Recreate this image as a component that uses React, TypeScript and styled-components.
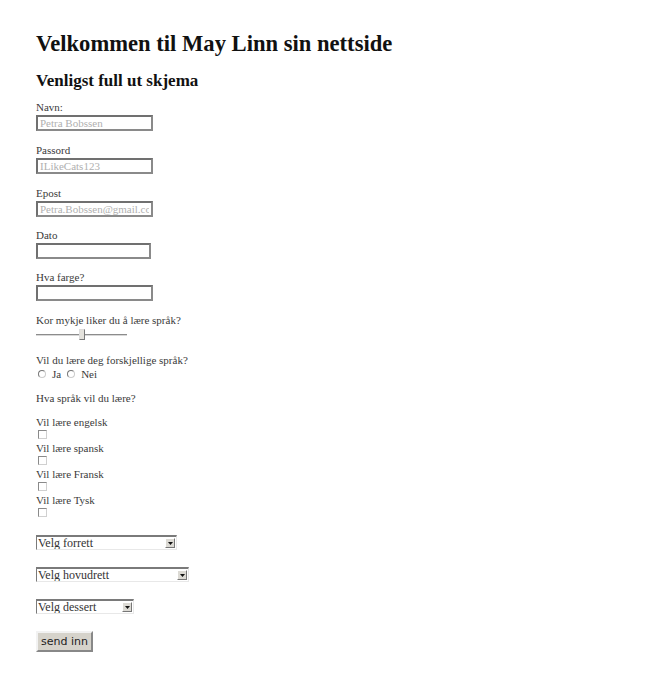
import React from "react";
import styled, { createGlobalStyle } from "styled-components";

const Global = createGlobalStyle`
  html, body { margin: 0; padding: 0; background: #fff; }
  body { font-family: "Liberation Serif", "Times New Roman", serif; }
`;

const Page = styled.main`
  padding: 31px 36px 40px 36px;
  display: flex;
  flex-direction: column;
  align-items: flex-start;
`;

const Title = styled.h1`
  margin: 0;
  font-size: 22.6px;
  line-height: 26px;
  font-weight: bold;
  color: #111;
`;

const Subtitle = styled.h2`
  margin: 14px 0 10px 0;
  font-size: 17px;
  line-height: 20px;
  font-weight: bold;
  color: #111;
`;

const Field = styled.div<{ $gap?: number }>`
  display: flex;
  flex-direction: column;
  align-items: flex-start;
  margin-bottom: ${(p) => (p.$gap ?? 13)}px;
`;

const Label = styled.label`
  font-size: 11px;
  line-height: 13px;
  color: #3a3a3a;
`;

const TextInput = styled.input<{ $w?: number }>`
  box-sizing: border-box;
  width: ${(p) => p.$w ?? 117}px;
  height: 16px;
  margin: 1px 0 0 0;
  padding: 0 2px;
  border: 2px solid #707070;
  border-right-color: #8a8a8a;
  border-bottom-color: #8a8a8a;
  font-family: "Liberation Serif", serif;
  font-size: 11px;
  color: #333;
  background: #fff;
  outline: none;
  &::placeholder { color: #b0b0b0; }
`;

const Range = styled.input`
  -webkit-appearance: none;
  appearance: none;
  width: 91px;
  height: 12px;
  margin: 2px 0 0 0;
  background: transparent;
  &::-webkit-slider-runnable-track {
    height: 2px;
    background: #8c8c8c;
    border-bottom: 1px solid #d8d8d8;
  }
  &::-webkit-slider-thumb {
    -webkit-appearance: none;
    width: 6px;
    height: 11px;
    margin-top: -5px;
    background: #e4e2dc;
    border: 1px solid #7a7a7a;
    border-left-color: #ddd;
    border-top-color: #ddd;
    box-sizing: border-box;
  }
`;

const RadioRow = styled.div`
  display: flex;
  align-items: center;
  gap: 3px;
  margin-top: 1px;
  font-size: 11px;
  line-height: 12px;
  color: #3a3a3a;
  padding-left: 2px;
`;

const Radio = styled.input`
  -webkit-appearance: none;
  appearance: none;
  width: 8px;
  height: 8px;
  margin: 0 3px 0 0;
  border-radius: 50%;
  border: 1px solid #777;
  border-bottom-color: #ccc;
  border-right-color: #ccc;
  background: #fff;
  box-sizing: border-box;
`;

const RadioText = styled.span`
  margin-right: 3px;
`;

const Check = styled.input`
  -webkit-appearance: none;
  appearance: none;
  width: 9px;
  height: 9px;
  margin: 1px 0 0 2px;
  border: 1px solid #8a8a8a;
  border-bottom-color: #d0d0d0;
  border-right-color: #d0d0d0;
  background: #fff;
  box-sizing: border-box;
`;

const SelectWrap = styled.div<{ $w: number }>`
  display: flex;
  align-items: stretch;
  box-sizing: border-box;
  width: ${(p) => p.$w}px;
  height: 15px;
  border-top: 2px solid #7a7a7a;
  border-left: 1px solid #7a7a7a;
  border-bottom: 1px solid #e8e8e8;
  border-right: 1px solid #e8e8e8;
  background: #fff;
  margin-bottom: 17px;
`;

const Select = styled.select`
  -webkit-appearance: none;
  appearance: none;
  flex: 1;
  min-width: 0;
  border: none;
  outline: none;
  padding: 0 1px;
  margin: 0;
  background: transparent;
  font-family: "Liberation Serif", serif;
  font-size: 12px;
  line-height: 12px;
  color: #333;
`;

const Arrow = styled.span`
  width: 10px;
  margin: 1px 1px 1px 0;
  box-sizing: border-box;
  background: #dcdad4;
  border: 1px solid #fff;
  border-right-color: #777;
  border-bottom-color: #777;
  display: flex;
  align-items: center;
  justify-content: center;
`;

const Button = styled.button`
  margin-top: 0;
  height: 21px;
  padding: 0 3px;
  background: #d6d3cb;
  border: 2px solid;
  border-color: #f2f2f2 #888 #888 #f2f2f2;
  font-family: "DejaVu Sans", Verdana, sans-serif;
  font-size: 11px;
  color: #222;
`;

const ArrowIcon = () => (
  <svg width="5" height="3" viewBox="0 0 5 3">
    <path d="M0 0h5L2.5 3z" fill="#111" />
  </svg>
);

const Dropdown = ({ w, label }: { w: number; label: string }) => (
  <SelectWrap $w={w}>
    <Select defaultValue="">
      <option value="">{label}</option>
    </Select>
    <Arrow>
      <ArrowIcon />
    </Arrow>
  </SelectWrap>
);

export default function App() {
  return (
    <>
      <Global />
      <Page>
        <Title>Velkommen til May Linn sin nettside</Title>
        <Subtitle>Venligst full ut skjema</Subtitle>

        <Field>
          <Label>Navn:</Label>
          <TextInput placeholder="Petra Bobssen" />
        </Field>
        <Field>
          <Label>Passord</Label>
          <TextInput placeholder="ILikeCats123" />
        </Field>
        <Field $gap={12}>
          <Label>Epost</Label>
          <TextInput placeholder="Petra.Bobssen@gmail.com" />
        </Field>
        <Field $gap={12}>
          <Label>Dato</Label>
          <TextInput $w={115} />
        </Field>
        <Field>
          <Label>Hva farge?</Label>
          <TextInput $w={117} />
        </Field>
        <Field $gap={13}>
          <Label>Kor mykje liker du å lære språk?</Label>
          <Range type="range" min={0} max={100} defaultValue={50} />
        </Field>
        <Field $gap={12}>
          <Label>Vil du lære deg forskjellige språk?</Label>
          <RadioRow>
            <Radio type="radio" name="lang" />
            <RadioText>Ja</RadioText>
            <Radio type="radio" name="lang" />
            <RadioText>Nei</RadioText>
          </RadioRow>
        </Field>
        <Field $gap={11}>
          <Label>Hva språk vil du lære?</Label>
        </Field>
        <Field $gap={3}>
          <Label>Vil lære engelsk</Label>
          <Check type="checkbox" />
        </Field>
        <Field $gap={3}>
          <Label>Vil lære spansk</Label>
          <Check type="checkbox" />
        </Field>
        <Field $gap={3}>
          <Label>Vil lære Fransk</Label>
          <Check type="checkbox" />
        </Field>
        <Field $gap={18}>
          <Label>Vil lære Tysk</Label>
          <Check type="checkbox" />
        </Field>

        <Dropdown w={141} label="Velg forrett" />
        <Dropdown w={153} label="Velg hovudrett" />
        <Dropdown w={98} label="Velg dessert" />

        <Button type="button">send inn</Button>
      </Page>
    </>
  );
}
